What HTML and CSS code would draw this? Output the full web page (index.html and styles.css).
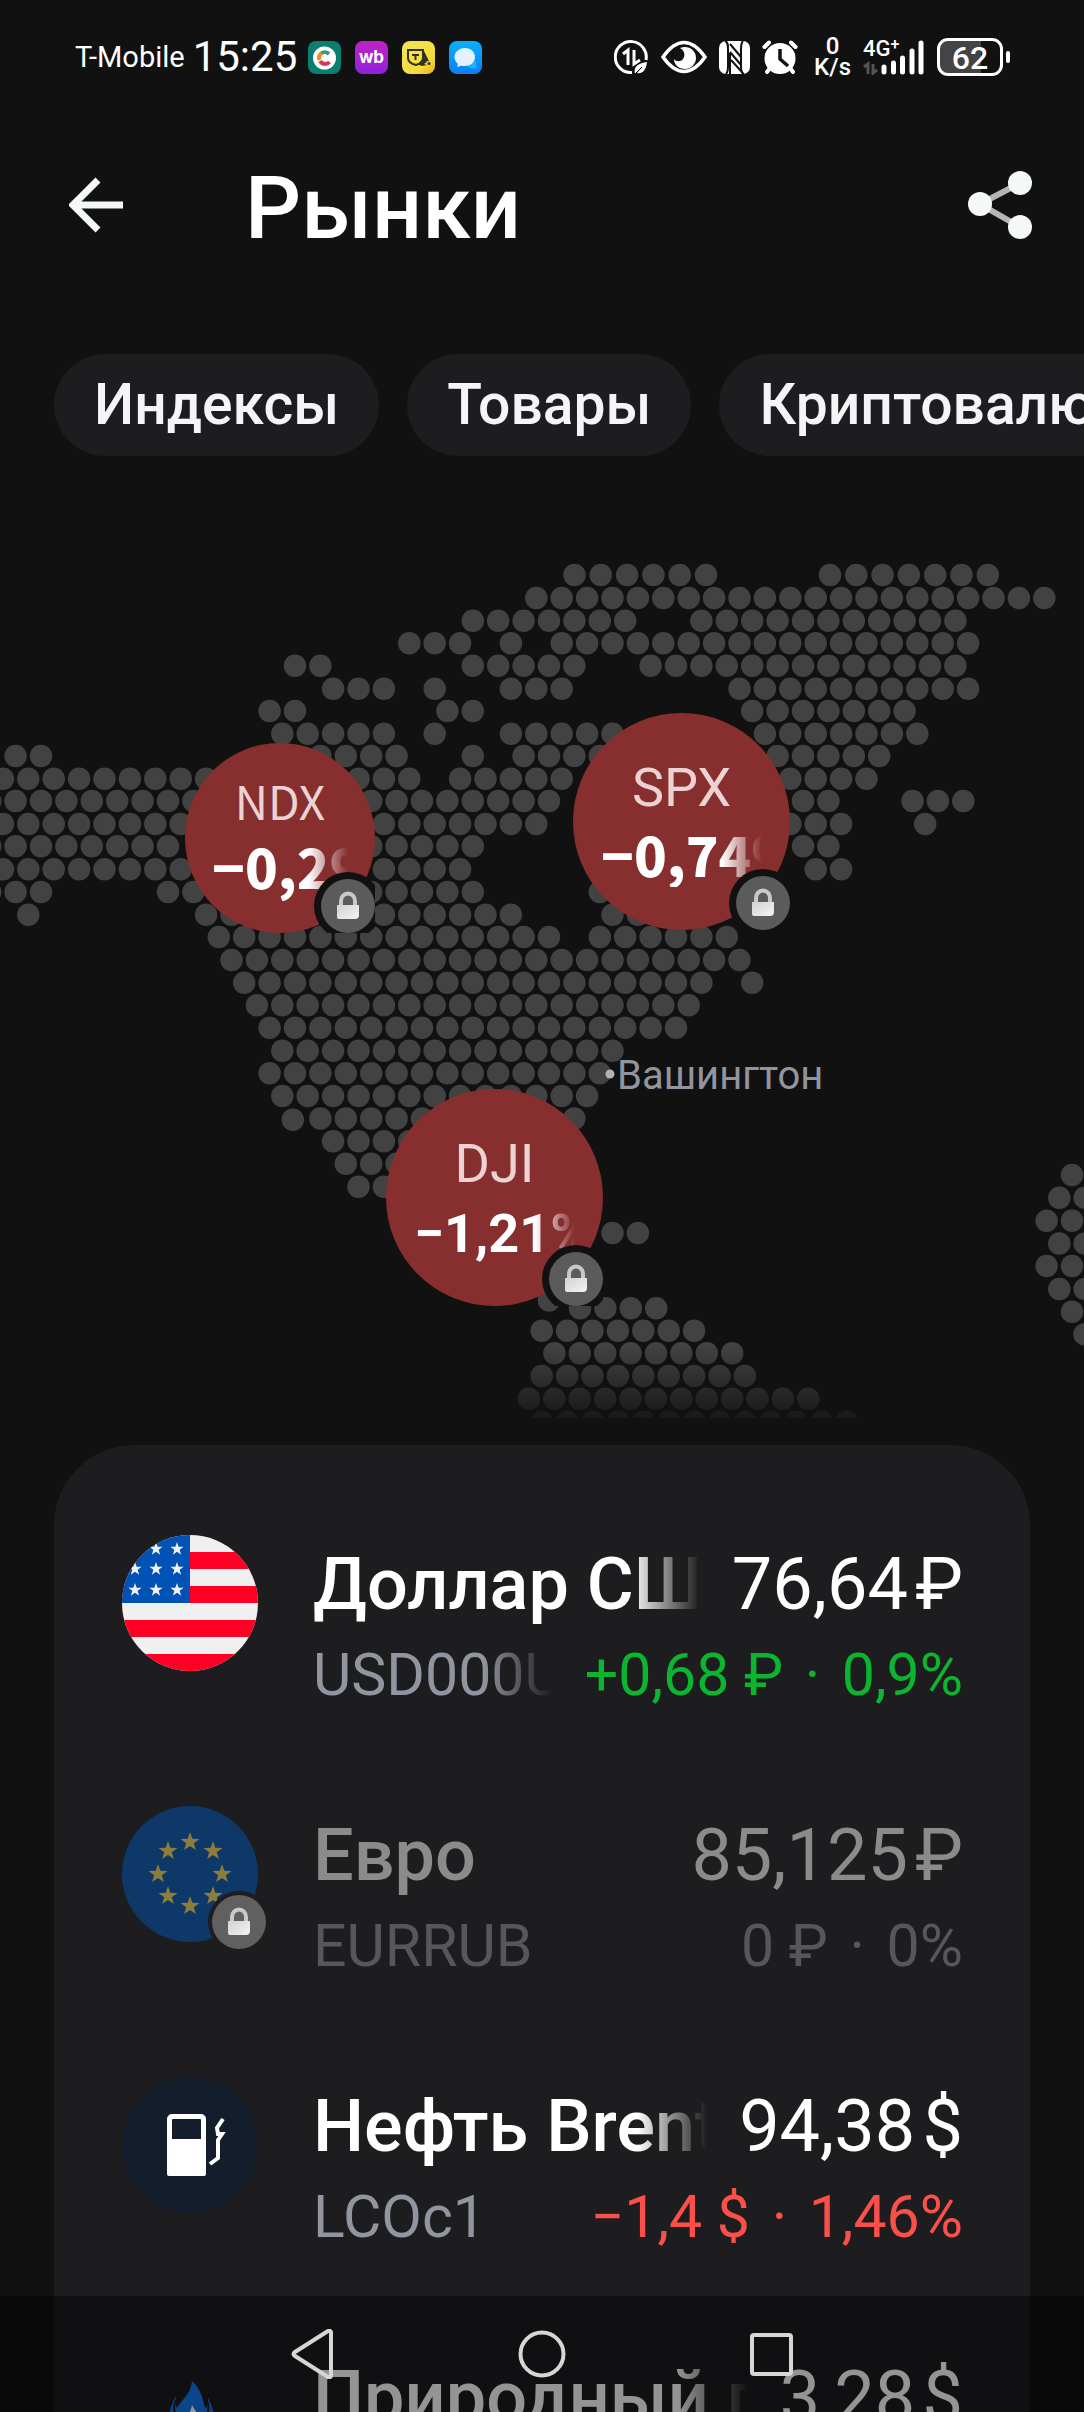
FILE: index.html
```html
<!DOCTYPE html>
<html lang="ru">
<head>
<meta charset="utf-8">
<meta name="viewport" content="width=device-width, initial-scale=1">
<title>Рынки</title>
<link rel="stylesheet" href="styles.css">
</head>
<body>
<svg class="defs" aria-hidden="true">
  <defs>
    <linearGradient id="lockFill" x1="0" y1="0" x2="1" y2="1"><stop offset="0" stop-color="#d2d2d2"/><stop offset="1" stop-color="#f4f4f4"/></linearGradient>
    <symbol id="lock" viewBox="0 0 54 54">
      <path d="M20 27v-5a7 7.500 0 0 1 14 0v5" fill="none" stroke="#c9c9c9" stroke-width="4"/>
      <path d="M16 26h22v10a4 4 0 0 1-4 4H18a2 2 0 0 1-2-2z" fill="url(#lockFill)"/>
    </symbol>
    <symbol id="star" viewBox="-10 -10 20 20">
      <path d="M0-10 2.300-3.200 9.500-3.100 3.800 1.200 5.900 8.100 0 4-5.900 8.100-3.800 1.200-9.500-3.100-2.300-3.200z"/>
    </symbol>
  </defs>
</svg>
<div class="app">
  <div class="status">
    <div class="status-side">
      <span class="carrier">T-Mobile</span>
      <span class="clock">15:25</span>
      <div class="apps">
        <svg viewBox="0 0 33 33"><rect width="33" height="33" rx="8" fill="#0a7f70"/><circle cx="16.500" cy="17" r="11.500" fill="#fff"/><g fill="none" stroke-width="4"><path d="M13 12.500a6 6 0 0 1 8 .5" stroke="#3a9b7a"/><path d="M13.500 12a6 6 0 0 0-2 7" stroke="#ee8a2a"/><path d="M12 20a6 6 0 0 0 9.500 1" stroke="#d23a56"/></g></svg>
        <svg viewBox="0 0 33 33"><defs><linearGradient id="wb" x1="0" y1="0" x2="0" y2="1"><stop offset="0" stop-color="#c022c4"/><stop offset="1" stop-color="#8f22dc"/></linearGradient></defs><rect width="33" height="33" rx="8" fill="url(#wb)"/><text x="16.500" y="22" text-anchor="middle" class="wb">wb</text></svg>
        <svg viewBox="0 0 33 33"><defs><linearGradient id="tb" x1="0" y1="0" x2="1" y2="1"><stop offset="0" stop-color="#f3e65a"/><stop offset=".7" stop-color="#f5dc3c"/><stop offset="1" stop-color="#f0a52a"/></linearGradient></defs><rect width="33" height="33" rx="8" fill="url(#tb)"/><path d="M6 9h15v8c0 4-4 6-7 7-4-1-8-3-8-7z" fill="none" stroke="#33321c" stroke-width="2"/><path d="M10 13h7v2h-2.500v4h-2v-4H10zM21 8l6 12-9 1 3-4zM15 23l8-3 2 1-3 2 3 1-5 1z" fill="#33321c"/><circle cx="27" cy="22.500" r="1.500" fill="#33321c"/></svg>
        <svg viewBox="0 0 33 33"><defs><linearGradient id="ms" x1="0" y1="0" x2="0" y2="1"><stop offset="0" stop-color="#08b0fb"/><stop offset="1" stop-color="#0b7ff8"/></linearGradient></defs><rect width="33" height="33" rx="8" fill="url(#ms)"/><path d="M17 24c4 4 8 3 10 4-1-2 1-4 0-8z" fill="#18b5f5"/><path d="M16 7c6 0 10 4 10 9s-4 9-10 9c-2 0-3 0-4-.500-1 1-3 1.500-4 1 1-1 1-2 .500-3C7 21 5.500 19 5.500 16 5.500 11 10 7 16 7z" fill="#e2f2fe"/></svg>
      </div>
    </div>
    <div class="status-side status-right">
      <svg width="35" height="35" viewBox="0 0 35 35" fill="none" stroke="#fff" stroke-width="3"><path d="M18 32.500A15.500 15.500 0 1 1 32 20"/><path d="M9 14l5-4v15M20 10v14l6-4"/><path d="M21 34c-2-8 4-11 12-12-1 9-5 12-10 11l6-7" fill="#fff" stroke="none"/><path d="M21 34l7-7" stroke="#111" stroke-width="1"/></svg>
      <svg width="46" height="34" viewBox="0 0 46 34"><path d="M2 17C9 7 15 2.500 23 2.500S37 7 44 17c-7 10-13 14.500-21 14.500S9 27 2 17z" fill="none" stroke="#fff" stroke-width="3.500"/><path d="M19 8c8-3 16 2 16 10 0 6-5 11-11 11s-11-4-11-10c2 3 7 3 9 0 3-4 1-9-3-11z" fill="#fff"/></svg>
      <svg width="31" height="33" viewBox="0 0 31 33"><rect width="31" height="33" rx="7" fill="#fff"/><path d="M6 0c3 1 3 4 3 8v17c0 4 0 6-2 8M25 33c-3-1-3-4-3-8M22 25V8c0-4 0-6 2-8M11 3l11 13M11 11l11 13M12 19l10 11M11 12v21" fill="none" stroke="#111" stroke-width="2"/></svg>
      <svg width="36" height="35" viewBox="0 0 36 35"><g fill="none" stroke="#fff" stroke-width="4" stroke-linecap="round"><path d="M2.500 7 7 2.500M33.500 7 29 2.500M8 28l-3 4M28 28l3 4"/></g><circle cx="18" cy="18.500" r="15.500" fill="#fff"/><path d="M18 9v10l8 7" fill="none" stroke="#111" stroke-width="3.500"/></svg>
      <span class="speed">0<br>K/s</span>
      <div class="signal">
        <span class="net">4G<sup>+</sup></span>
        <svg width="62" height="36" viewBox="0 0 62 36" fill="none" stroke="#fff" stroke-width="5" stroke-linecap="round"><path d="M21 28v5M30.500 24v9M39.500 19v14M49 12v21M58 4v29"/><path d="M1 28l4-3v10M10 25v9l4-3" stroke="#555" stroke-width="3" stroke-linecap="butt"/></svg>
      </div>
      <div class="battery"><span class="battery-level">62</span></div>
    </div>
  </div>

  <header class="header">
    <button class="icon-btn" aria-label="Назад"><svg width="56" height="56" viewBox="0 0 56 56" fill="none" stroke="#f5f8f9" stroke-width="7"><path d="M54 28H6M29 3 4 28l25 25"/></svg></button>
    <h1>Рынки</h1>
    <button class="icon-btn share" aria-label="Поделиться"><svg width="66" height="70" viewBox="0 0 66 70"><path d="M52 13 12 34l40 23" fill="none" stroke="#b5b5b5" stroke-width="6"/><g fill="#f5f8f9"><circle cx="52" cy="13" r="12"/><circle cx="12" cy="34" r="12"/><circle cx="52" cy="57" r="12"/></g></svg></button>
  </header>

  <nav class="chips" aria-label="Категории">
    <button>Индексы</button>
    <button>Товары</button>
    <button>Криптовалюты</button>
  </nav>

  <section class="map" aria-label="Карта индексов">
    <svg class="map-dots" viewBox="0 456 1084 989" aria-hidden="true">
      <defs><linearGradient id="fade" x1="0" y1="0" x2="0" y2="1"><stop offset="0" stop-color="#111" stop-opacity="0"/><stop offset="1" stop-color="#111"/></linearGradient></defs>
      <!-- every run is a line whose zero-length dashes are drawn as round dots -->
      <path class="dots dots-wide" d="M574.500 575h132M830 575h158.500"/>
      <path class="dots" d="
        M536.300 598h509
        M472.800 620.700h153.500M701.400 620.700h255
        M409.300 643.300h51.500M510.900 643.300h1M561.700 643.300h407.500
        M295 665.800h26M472.800 665.800h102.500M650.600 665.800h305.500
        M333.100 688.700h51.500M434.700 688.700h1M510.900 688.700h51.500M739.500 688.700h229.500
        M269.600 711h26M447.400 711h26M752.200 711h153.500
        M282.300 733.800h102.500M434.700 733.800h1M510.900 733.800h102.500M764.900 733.800h153.500
        M15.600 756h26M320.400 756h77M472.800 756h1M523.600 756h77M777.600 756h102.500
        M2.900 778.800h204M358.500 778.800h51.500M460.100 778.800h102.500M790.300 778.800h77
        M-9.800 801h204M371.200 801h178.500M803 801h26M912.500 801h51.500
        M2.900 824h179M383.900 824h153.500M790.300 824h51.500M925.200 824h1
        M-9.800 846.300h179M371.200 846.300h102.500M803 846.300h26
        M2.900 869.300h179M383.900 869.300h77M815.700 869.300h26
        M-9.800 892h51.500M168 892h26M371.200 892h102.500M599.800 892h1
        M28.300 914.700h1M206.100 914.700h26M383.900 914.700h128M612.500 914.700h26
        M218.800 937h331M599.800 937h128
        M231.500 960h509
        M244.200 982.700h458M752.200 982.700h1
        M256.900 1005.300h432.500
        M269.600 1027.700h407
        M282.300 1050.700h331
        M269.600 1073.300h331
        M282.300 1096h305.500
        M292.800 1119.800h1M320.400 1118.500h255
        M333.100 1141.300h128
        M345.800 1163.700h77
        M358.500 1186.700h51.500
        M612.500 1233h26
        M549 1300.500h1M580 1308.300h77
        M541.700 1330.700h153.500
        M554.400 1353.300h178.500
        M541.700 1376h204
        M528.900 1398.700h280
        M1072 1175h1M1059.300 1197.700h26M1046.600 1220.700h26M1059.300 1243.500h26
        M1046.600 1266h26M1059.300 1289h26M1072 1311.700h1M1084.500 1334.300h1"/>
      <path class="dots" d="M542 1421.700h305.500"/>
      <rect x="0" y="1345" width="1084" height="73" fill="url(#fade)" opacity=".85"/>
      <rect x="0" y="1418" width="1084" height="27" fill="#111"/>
      <circle cx="610" cy="1074" r="4.500" fill="#b3b3b6"/>
    </svg>
    <span class="city">Вашингтон</span>
    <button class="pin pin-ndx"><span class="pin-label">NDX</span><span class="pin-value">−0,29%</span><svg class="lock"><use href="#lock"/></svg></button>
    <button class="pin pin-spx"><span class="pin-label">SPX</span><span class="pin-value">−0,74%</span><svg class="lock"><use href="#lock"/></svg></button>
    <button class="pin pin-dji"><span class="pin-label">DJI</span><span class="pin-value">−1,21%</span><svg class="lock"><use href="#lock"/></svg></button>
  </section>

  <ul class="quotes">
    <li class="quote">
      <div class="logo">
        <svg viewBox="0 0 136 136"><defs><clipPath id="round"><circle cx="68" cy="68" r="68"/></clipPath></defs><g clip-path="url(#round)"><rect width="136" height="136" fill="#f0f0f0"/><path d="M0 17h136v17H0zM0 51h136v17H0zM0 85h136v17H0zM0 119h136v17H0z" fill="#fe0024"/><rect width="68" height="68" fill="#0052b4"/>
        <g fill="#f0f0f0"><use href="#star" x="27" y="7" width="14" height="14"/><use href="#star" x="48" y="7" width="14" height="14"/><use href="#star" x="6" y="27" width="14" height="14"/><use href="#star" x="27" y="27" width="14" height="14"/><use href="#star" x="48" y="27" width="14" height="14"/><use href="#star" x="6" y="48" width="14" height="14"/><use href="#star" x="27" y="48" width="14" height="14"/><use href="#star" x="48" y="48" width="14" height="14"/></g></g></svg>
      </div>
      <div class="info">
        <div class="line main"><span class="name fade">Доллар США</span><span class="price">76,64&#8202;₽</span></div>
        <div class="line sub"><span class="name fade">USD000UTSTOM</span><span class="up">+0,68 ₽ <i class="sep">·</i> 0,9%</span></div>
      </div>
    </li>
    <li class="quote closed">
      <div class="logo">
        <svg viewBox="0 0 136 136"><circle cx="68" cy="68" r="68" fill="#0d3868"/><g fill="#8d7d3c"><use href="#star" x="58" y="26" width="20" height="20"/><use href="#star" x="81" y="35" width="20" height="20"/><use href="#star" x="90" y="58" width="20" height="20"/><use href="#star" x="81" y="80" width="20" height="20"/><use href="#star" x="58" y="90" width="20" height="20"/><use href="#star" x="36" y="80" width="20" height="20"/><use href="#star" x="26" y="58" width="20" height="20"/><use href="#star" x="36" y="35" width="20" height="20"/></g></svg>
        <svg class="lock"><use href="#lock"/></svg>
      </div>
      <div class="info">
        <div class="line main"><span class="name">Евро</span><span class="price">85,125&#8202;₽</span></div>
        <div class="line sub"><span class="name">EURRUB</span><span>0 ₽ <i class="sep">·</i> 0%</span></div>
      </div>
    </li>
    <li class="quote">
      <div class="logo">
        <svg viewBox="0 0 136 136"><circle cx="68" cy="68" r="68" fill="#141d2c"/><path fill="#fff" fill-rule="evenodd" d="M50 37h29a5 5 0 0 1 5 5v55a2 2 0 0 1-2 2H47a2 2 0 0 1-2-2V42a5 5 0 0 1 5-5zm1 5a1 1 0 0 0-1 1v19h29V43a1 1 0 0 0-1-1z"/><path d="M101 42l-6 9 1 6h4l-4 6v18l-8 6" fill="none" stroke="#fff" stroke-width="4"/></svg>
      </div>
      <div class="info">
        <div class="line main"><span class="name fade">Нефть Brent</span><span class="price">94,38&#8202;$</span></div>
        <div class="line sub"><span class="name">LCOc1</span><span class="down">−1,4 $ <i class="sep">·</i> 1,46%</span></div>
      </div>
    </li>
    <li class="quote">
      <div class="logo">
        <svg viewBox="0 0 136 136"><path d="M70 33c11 10 10 20 14 28 2-4 2-8 2-11 9 16 7 33-2 42-10 9-24 8-31-1-9-11-8-27 1-43-1 5 0 9 1 12 5-9 14-14 15-27z" fill="#1478ee"/><path d="M54 52c-3 6-2 12 0 15M85 52c2 5 2 11-1 16" fill="none" stroke="#1d1d1f" stroke-width="2"/><path d="M70 57c4 8 12 14 10 28-4 9-16 9-20 0-2-12 8-16 10-28z" fill="#fff"/></svg>
      </div>
      <div class="info">
        <div class="line main"><span class="name fade">Природный газ</span><span class="price">3,28&#8202;$</span></div>
      </div>
    </li>
  </ul>

  <div class="sysnav">
    <button aria-label="Назад"><svg width="50" height="50" viewBox="0 0 50 50"><path d="M43 3v44a2 2 0 0 1-3 1L7 27q-3-2 0-4L40 2a2 2 0 0 1 3 1z"/></svg></button>
    <button aria-label="Домой"><svg width="50" height="50" viewBox="0 0 50 50"><circle cx="25" cy="25" r="21.500"/></svg></button>
    <button aria-label="Недавние"><svg width="50" height="50" viewBox="0 0 50 50"><rect x="6" y="6" width="39" height="39" rx="2"/></svg></button>
  </div>
</div>
</body>
</html>
```

FILE: styles.css
```css
* { box-sizing: border-box; }

body {
  margin: 0;
  background: #111;
  color: #fff;
  font-family: Roboto, "Noto Sans", sans-serif;
}

button {
  margin: 0;
  padding: 0;
  border: 0;
  background: none;
  color: inherit;
  font: inherit;
}

svg { display: block; }
.defs { position: absolute; width: 0; height: 0; }

.app {
  position: relative;
  display: flex;
  flex-direction: column;
  height: 100vh;
  overflow: hidden;
}

/* System status bar */
.status {
  display: flex;
  justify-content: space-between;
  align-items: center;
  flex: none;
  height: 114px;
  padding: 0 81px 0 75px;
}
.status-side { display: flex; align-items: center; }
.carrier { margin-right: 8px; font-size: 29px; line-height: 32px; }
.clock { margin-right: 11px; font-size: 42px; line-height: 48px; }
.apps { display: flex; gap: 14px; }
.apps svg { width: 33px; height: 33px; }
.wb { font: 700 17px Inter, sans-serif; fill: #fff; }
.status-right { gap: 12px; }
.speed { margin-left: 4px; font-size: 24px; line-height: 21px; text-align: center; font-weight: 500; }
.signal { position: relative; }
.net { position: absolute; left: 0; top: -2px; font-size: 22px; line-height: 24px; font-weight: 500; }
.net sup { font-size: 16px; line-height: 1px; vertical-align: 6px; }
.battery {
  position: relative;
  width: 66px;
  height: 38px;
  border: 3px solid #fff;
  border-radius: 11px;
  background: linear-gradient(to right, #444 68%, transparent 68%);
  font-size: 32px;
  line-height: 34px;
  font-weight: 500;
  text-align: center;
}
.battery::after {
  content: "";
  position: absolute;
  right: -10px;
  top: 10px;
  width: 4px;
  height: 12px;
  border-radius: 2px;
  background: #fff;
}

/* Screen title */
.header {
  display: flex;
  align-items: center;
  flex: none;
  padding: 42px 50px 94px 69px;
}
.header h1 {
  flex: 1;
  margin: 0 0 0 120px;
  font-size: 88px;
  line-height: 104px;
  font-weight: 500;
}
.icon-btn { margin-bottom: 6px; }

.chips {
  display: flex;
  gap: 28px;
  flex: none;
  padding: 0 54px;
  overflow: hidden;
}
.chips button {
  flex: none;
  height: 102px;
  padding: 0 40px;
  border-radius: 51px;
  background: #1d1d1f;
  color: #f5f5f8;
  font-size: 57px;
  line-height: 100px;
  font-weight: 500;
}

/* Dotted map with index pins */
.map { position: relative; flex: none; }
.map-dots { width: 100%; height: auto; }
.dots {
  fill: none;
  stroke: #424242;
  stroke-width: 22.500px;
  stroke-linecap: round;
  stroke-dasharray: 0 25.400px;
}
.dots-wide { stroke-dasharray: 0 26.300px; }
.city {
  position: absolute;
  left: calc(50% + 75px);
  top: 60%;
  margin-top: 2px;
  color: #9195a0;
  font-size: 40px;
  line-height: 50px;
}
.pin {
  position: absolute;
  display: flex;
  flex-direction: column;
  align-items: center;
  width: 217px;
  height: 217px;
  padding: 42px 28px 0;
  overflow: hidden;
}
.pin::before {
  content: "";
  position: absolute;
  inset: 0;
  border-radius: 50%;
  background: #872f2f;
}
.pin-label {
  position: relative;
  color: #ecd2d2;
  font-size: 54px;
  line-height: 66px;
}
.pin-value {
  position: relative;
  width: 100%;
  overflow: hidden;
  white-space: nowrap;
  text-align: left;
  font-size: 54px;
  line-height: 74px;
  font-weight: 700;
  -webkit-mask-image: linear-gradient(to right, #000 calc(100% - 40px), transparent);
  mask-image: linear-gradient(to right, #000 calc(100% - 40px), transparent);
}
.pin-ndx .pin-label,
.pin-ndx .pin-value,
.pin-spx .pin-value { font-family: "Noto Sans CJK SC", sans-serif; }
.pin-spx .pin-value { line-height: 66px; font-weight: 900; }
.pin-ndx { left: calc(50% - 357px); top: 29%; width: 190px; height: 190px; padding: 26px 27px 0; }
.pin-ndx .pin-label { font-size: 46px; line-height: 62px; }
.pin-ndx .pin-value { line-height: 70px; font-weight: 900; }
.pin-spx { left: calc(50% + 31px); top: 26%; }
.pin-dji { left: calc(50% - 156px); top: 64%; }

.lock {
  position: absolute;
  right: 0;
  bottom: 0;
  width: 54px;
  height: 54px;
  border-radius: 50%;
  background: #5b5b5b;
  box-shadow: 0 0 0 7px #111;
}

/* Quotes card */
.quotes {
  display: flex;
  flex-direction: column;
  gap: 95px;
  flex: 1;
  margin: 0 54px;
  padding: 90px 67px 0 68px;
  border-radius: 80px 80px 0 0;
  background: #1d1d1f;
  list-style: none;
}
.quote { display: flex; gap: 55px; flex: none; }
.logo { position: relative; flex: none; width: 136px; height: 136px; }
.logo .lock { right: -8px; bottom: -7px; background: #606060; box-shadow: 0 0 0 4px #1d1d1f; }
.info {
  display: flex;
  flex-direction: column;
  gap: 12px;
  flex: 1;
  min-width: 0;
  padding-top: 8px;
}
.line { display: flex; gap: 32px; white-space: nowrap; }
.name { flex: 1; min-width: 0; overflow: hidden; }
.main { font-size: 72px; line-height: 84px; }
.main .name { font-weight: 500; }
.sub { font-size: 59px; line-height: 72px; }
.sub .name { color: #9195a0; }
.sep { margin: 0 7px; font-style: normal; }
.fade {
  -webkit-mask-image: linear-gradient(to right, #000 calc(100% - 70px), transparent);
  mask-image: linear-gradient(to right, #000 calc(100% - 70px), transparent);
}
.up { color: #0cb52f; }
.down { color: #fb5049; }
.closed .main { color: #8b8b8b; }
.closed .sub, .closed .sub .name { color: #55575d; }

/* System navigation */
.sysnav {
  position: absolute;
  left: 0;
  right: 0;
  bottom: 0;
  display: flex;
  justify-content: center;
  align-items: center;
  gap: 179px;
  height: 116px;
  background: rgba(0, 0, 0, .42);
}
.sysnav svg { fill: none; stroke: #d6d6d6; stroke-width: 4px; }
```
